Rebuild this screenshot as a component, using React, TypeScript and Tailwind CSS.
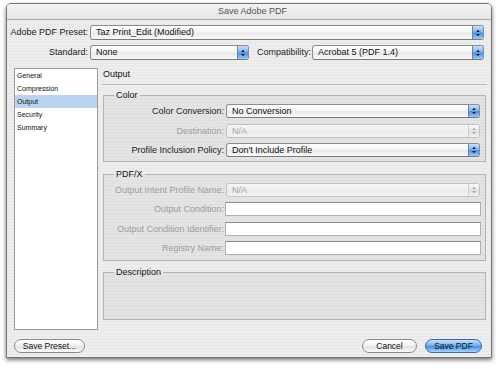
import React from "react";

const FONT = { fontFamily: '"Liberation Sans", Arial, sans-serif' };

function Arrows({ disabled }: { disabled?: boolean }) {
  const c = disabled ? "#a6a6a6" : "#1a1a1a";
  return (
    <svg width="11" height="12" viewBox="0 0 11 12">
      <path d="M5.5 2.5 L7.5 5 L3.5 5 Z" fill={c} />
      <path d="M5.5 9.5 L7.5 7 L3.5 7 Z" fill={c} />
    </svg>
  );
}

function Popup({
  text,
  disabled,
  className = "",
  h = "h-[15px]",
}: {
  text: string;
  disabled?: boolean;
  className?: string;
  h?: string;
}) {
  return (
    <div
      className={`${h} flex items-stretch rounded-[3px] border ${
        disabled
          ? "border-[#c2c2c2] bg-[linear-gradient(to_bottom,#f6f6f6,#ececec_55%,#f2f2f2)] text-[#a3a3a3]"
          : "border-[#8c8c8c] border-b-[#7a7a7a] bg-[linear-gradient(to_bottom,#ffffff,#f4f4f4_45%,#e9e9e9_55%,#fafafa)] text-[#111]"
      } ${className}`}
    >
      <div className="flex-1 pl-[5px] text-[9px] leading-[13px] overflow-hidden whitespace-nowrap">
        {text}
      </div>
      <div
        className={`w-[11px] flex items-center justify-center rounded-r-[2px] border-l ${
          disabled
            ? "border-[#d0d0d0] bg-[linear-gradient(to_bottom,#fafafa,#e6e6e6_50%,#dcdcdc_51%,#f4f4f4)]"
            : "border-[#5b86c4] bg-[linear-gradient(to_bottom,#c9e2fb,#7fb4ef_45%,#4a90e6_55%,#9ccbf8)]"
        }`}
      >
        <Arrows disabled={disabled} />
      </div>
    </div>
  );
}

function TextField() {
  return (
    <div className="ml-[1px] mr-[-1px] flex-1 h-[14px] bg-white border border-[#b0b0b0] border-t-[#8c8c8c]" />
  );
}

function Row({
  label,
  disabled,
  children,
  className = "",
}: {
  label: string;
  disabled?: boolean;
  children: React.ReactNode;
  className?: string;
}) {
  return (
    <div className={`flex items-center h-[14px] pr-[5px] ${className}`}>
      <div
        className={`w-[120px] text-right text-[9px] leading-[14px] whitespace-nowrap ${
          disabled ? "text-[#9c9c9c]" : "text-[#1a1a1a]"
        }`}
      >
        {label}
      </div>
      {children}
    </div>
  );
}

function Group({
  title,
  children,
  className = "",
}: {
  title: string;
  children: React.ReactNode;
  className?: string;
}) {
  return (
    <fieldset
      className={`mx-[1px] border border-[#b3b3b3] bg-black/[0.035] ${className}`}
    >
      <legend className="ml-[10px] px-[2px] text-[9px] leading-[11px] text-[#111]">
        {title}
      </legend>
      {children}
    </fieldset>
  );
}

function PillButton({
  label,
  primary,
  className = "",
}: {
  label: string;
  primary?: boolean;
  className?: string;
}) {
  return (
    <div
      className={`h-[14px] rounded-full border flex items-center justify-center text-[8.5px] leading-[12px] text-[#111] ${
        primary
          ? "border-[#46689e] bg-[linear-gradient(to_bottom,#c4e0fc,#77b0f0_45%,#4b90e8_55%,#a6d4fb)]"
          : "border-[#8a8a8a] bg-[linear-gradient(to_bottom,#ffffff,#f2f2f2_45%,#e3e3e3_55%,#fbfbfb)]"
      } ${className}`}
    >
      {label}
    </div>
  );
}

export default function App() {
  const items = ["General", "Compression", "Output", "Security", "Summary"];
  return (
    <div className="w-[500px] h-[369px] bg-white overflow-hidden" style={FONT}>
      <div className="ml-[6px] mt-[3px] w-[486px] h-[355px] flex flex-col rounded-t-[5px] border border-[#747474] shadow-[0_2px_4px_rgba(0,0,0,0.55)] bg-[repeating-linear-gradient(to_bottom,#ededed_0px,#ededed_2px,#e8e8e8_2px,#e8e8e8_3px)]">
        {/* Title bar */}
        <div className="h-[16px] shrink-0 rounded-t-[4px] border-b border-[#a9a9a9] bg-[linear-gradient(to_bottom,#f4f4f4,#e4e4e4)] text-center text-[9px] leading-[15px] text-[#555] pl-[7px]">
          Save Adobe PDF
        </div>

        {/* Preset row */}
        <div className="flex items-center mt-[5px] pr-[7px]">
          <div className="w-[81px] text-right text-[9px] leading-[15px] text-[#1a1a1a] whitespace-nowrap">
            Adobe PDF Preset:
          </div>
          <Popup text="Taz Print_Edit (Modified)" className="ml-[2px] flex-1" />
        </div>

        {/* Standard / Compatibility row */}
        <div className="flex items-center mt-[5px] pr-[7px]">
          <div className="w-[81px] text-right text-[9px] leading-[15px] text-[#1a1a1a]">
            Standard:
          </div>
          <Popup text="None" className="ml-[2px] w-[159px]" />
          <div className="w-[62px] text-right text-[9px] leading-[15px] text-[#1a1a1a] whitespace-nowrap">
            Compatibility:
          </div>
          <Popup text="Acrobat 5 (PDF 1.4)" className="ml-[1px] flex-1" />
        </div>

        {/* Main */}
        <div className="flex mt-[8px]">
          <div className="ml-[7px] w-[84px] h-[262px] bg-white border border-[#9b9b9b] pt-0">
            {items.map((it) => (
              <div
                key={it}
                className={`h-[13px] pl-[2px] text-[7px] leading-[13px] text-[#111] ${
                  it === "Output" ? "bg-[#bcd2f1]" : ""
                }`}
              >
                {it}
              </div>
            ))}
          </div>

          <div className="ml-[4px] mr-[4px] flex-1 flex flex-col">
            <div className="h-[17px] border-b border-[#b9b9b9] pt-[1px] pl-[1px] text-[9px] leading-[11px] text-[#111]">
              Output
            </div>

            <Group title="Color" className="mt-[5px] pt-[3px] pb-[4px]">
              <Row label="Color Conversion:">
                <Popup text="No Conversion" h="h-[14px]" className="ml-[2px] flex-1" />
              </Row>
              <Row label="Destination:" disabled className="mt-[6px]">
                <Popup text="N/A" disabled h="h-[14px]" className="ml-[2px] flex-1" />
              </Row>
              <Row label="Profile Inclusion Policy:" className="mt-[5px]">
                <Popup text="Don't Include Profile" h="h-[14px]" className="ml-[2px] flex-1" />
              </Row>
            </Group>

            <Group title="PDF/X" className="mt-[7px] pt-[3px] pb-[5px]">
              <Row label="Output Intent Profile Name:" disabled>
                <Popup text="N/A" disabled h="h-[14px]" className="ml-[2px] flex-1" />
              </Row>
              <Row label="Output Condition:" disabled className="mt-[5px]">
                <TextField />
              </Row>
              <Row label="Output Condition Identifier:" disabled className="mt-[6px]">
                <TextField />
              </Row>
              <Row label="Registry Name:" disabled className="mt-[5px]">
                <TextField />
              </Row>
            </Group>

            <Group title="Description" className="mt-[6px]">
              <div className="h-[41px]" />
            </Group>
          </div>
        </div>

        {/* Buttons */}
        <div className="flex items-center mt-[9px]">
          <PillButton label="Save Preset..." className="ml-[7px] w-[71px]" />
          <div className="flex-1" />
          <PillButton label="Cancel" className="w-[55px]" />
          <PillButton label="Save PDF" primary className="ml-[8px] mr-[9px] w-[57px]" />
        </div>
      </div>
    </div>
  );
}
